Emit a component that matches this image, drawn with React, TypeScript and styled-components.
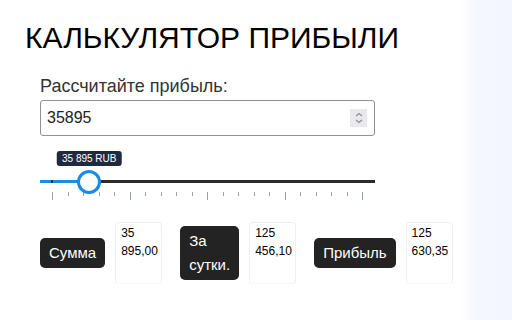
import React, { useState } from 'react'
import styled, { createGlobalStyle } from 'styled-components'

const GlobalStyle = createGlobalStyle`
  html, body {
    margin: 0;
    padding: 0;
    background: #fff;
    font-family: "Liberation Sans", Arial, sans-serif;
  }
`

const MIN = 0
const MAX = 500000
const TICKS = 21

// ru-RU puts non-breaking spaces in; plain spaces let the narrow boxes wrap
const plain = (s: string) => s.replace(/[\u00a0\u202f]/g, ' ')

const formatRub = (n: number) =>
  plain(n.toLocaleString('ru-RU', { minimumFractionDigits: 2, maximumFractionDigits: 2 }))

const App = () => {
  const [amount, setAmount] = useState(35895)
  const percent = (amount - MIN) / (MAX - MIN)
  const thumbX = 12 + percent * 310 + 15

  return (
    <Page>
      <GlobalStyle />
      <Main>
        <Title>КАЛЬКУЛЯТОР ПРИБЫЛИ</Title>

        <Form>
          <Label htmlFor="amount">Рассчитайте прибыль:</Label>
          <InputWrap>
            <NumberInput
              id="amount"
              type="text"
              value={amount}
              onChange={(e) => setAmount(Number(e.target.value.replace(/\D/g, '')) || 0)}
            />
            <Spinner>
              <svg width="10" height="14" viewBox="0 0 10 14">
                <path d="M2 5 L5 2.5 L8 5" fill="none" stroke="#8e8e98" strokeWidth="1.2" />
                <path d="M2 9 L5 11.5 L8 9" fill="none" stroke="#8e8e98" strokeWidth="1.2" />
              </svg>
            </Spinner>
          </InputWrap>

          <SliderBox>
            <Track>
              <Fill style={{ width: thumbX }} />
              <FillMark />
              <Tooltip style={{ left: thumbX }}>
                {plain(amount.toLocaleString('ru-RU'))} RUB
              </Tooltip>
              <Thumb style={{ left: thumbX }} />
            </Track>
            <Ticks>
              {Array.from({ length: TICKS }).map((_, i) => (
                <Tick key={i} $major={i % 5 === 0} />
              ))}
            </Ticks>
          </SliderBox>

          <Results>
            <ResultLabel>Сумма</ResultLabel>
            <ResultValue>{formatRub(amount)}</ResultValue>
            <ResultLabel $narrow>За сутки.</ResultLabel>
            <ResultValue>125 456,10</ResultValue>
            <ResultLabel>Прибыль</ResultLabel>
            <ResultValue>125 630,35</ResultValue>
          </Results>
        </Form>
      </Main>
      <Aside />
    </Page>
  )
}

export default App

const Page = styled.div`
  display: flex;
  width: 512px;
  height: 320px;
  overflow: hidden;
`

const Main = styled.div`
  flex: 1;
  padding: 19px 0 0 25px;
`

const Aside = styled.div`
  width: 52px;
  background: linear-gradient(to right, #ffffff 0%, #f4f7fe 32%, #f3f6fe 100%);
`

const Title = styled.h1`
  margin: 0;
  font-size: 30px;
  line-height: 37px;
  font-weight: 400;
  color: #000;
`

const Form = styled.div`
  padding-left: 15px;
  margin-top: 20px;
  width: 335px;
`

const Label = styled.label`
  display: block;
  font-size: 18px;
  line-height: 21px;
  color: #333;
`

const InputWrap = styled.div`
  position: relative;
  margin-top: 3px;
`

const NumberInput = styled.input`
  box-sizing: border-box;
  width: 335px;
  height: 36px;
  border: 1px solid #8f8f9d;
  border-radius: 3px;
  padding: 0 6px;
  font-family: "Liberation Sans", Arial, sans-serif;
  font-size: 16px;
  color: #222;
  outline: none;
`

const Spinner = styled.div`
  position: absolute;
  top: 9px;
  right: 8px;
  width: 17px;
  height: 18px;
  background: #e9e9ed;
  display: flex;
  align-items: center;
  justify-content: center;
`

const SliderBox = styled.div`
  padding-top: 44px;
`

const Track = styled.div`
  position: relative;
  height: 3px;
  background: #2b2b2b;
`

const Fill = styled.div`
  position: absolute;
  left: 0;
  top: 0;
  height: 3px;
  background: #1a8be6;
`

const FillMark = styled.div`
  position: absolute;
  left: 11px;
  top: 0;
  width: 2px;
  height: 3px;
  background: #2b2b2b;
`

const Thumb = styled.div`
  position: absolute;
  top: 1.5px;
  width: 24px;
  height: 24px;
  box-sizing: border-box;
  border: 3px solid #1a8be6;
  border-radius: 50%;
  background: #fff;
  transform: translate(-50%, -50%);
`

const Tooltip = styled.div`
  position: absolute;
  top: -29px;
  transform: translateX(-50%);
  height: 15px;
  padding: 0 5px;
  border-radius: 3px;
  background: #1f2a41;
  color: #fff;
  font-size: 10px;
  line-height: 15px;
  white-space: nowrap;
`

const Ticks = styled.div`
  display: flex;
  justify-content: space-between;
  align-items: flex-start;
  margin: 9px 12px 0 12px;
  width: 311px;
`

const Tick = styled.span<{ $major?: boolean }>`
  width: 1px;
  height: ${(p) => (p.$major ? '8px' : '4px')};
  background: #98a3ae;
`

const Results = styled.div`
  display: flex;
  align-items: center;
  margin-top: 22px;
  width: 420px;
`

const ResultLabel = styled.div<{ $narrow?: boolean }>`
  flex: none;
  width: ${(p) => (p.$narrow ? '41px' : 'auto')};
  padding: 3px 9px 4px;
  border-radius: 5px;
  background: #232323;
  color: #fff;
  font-size: 15px;
  line-height: 23.5px;
  margin-right: 10px;
`

const ResultValue = styled.div`
  box-sizing: border-box;
  flex: none;
  width: 47px;
  height: 62px;
  padding: 1px 5px;
  margin-right: 18px;
  border: 1px solid #efefef;
  border-bottom-color: #f7f7f7;
  border-radius: 4px;
  background: #fff;
  color: #000;
  font-size: 12px;
  line-height: 18px;
`
